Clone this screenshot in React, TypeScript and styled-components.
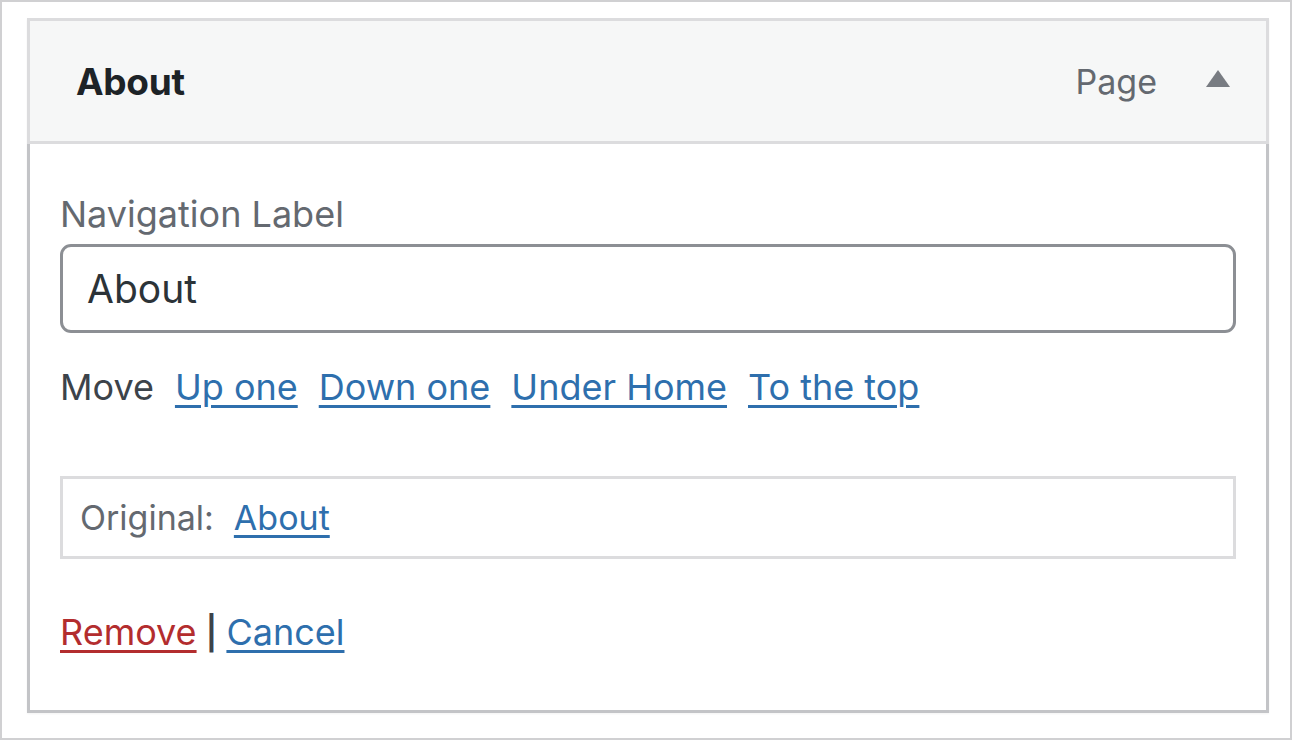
import React from "react";
import styled, { createGlobalStyle } from "styled-components";

const GlobalStyle = createGlobalStyle`
  html, body {
    margin: 0;
    padding: 0;
    background: #ffffff;
  }
  body {
    font-family: Inter, "Noto Sans", "Liberation Sans", sans-serif;
  }
`;

const Frame = styled.div`
  box-sizing: border-box;
  width: 1292px;
  height: 740px;
  border: 2px solid #d0d0d2;
  padding: 16px 0 0 25px;
  background: #ffffff;
`;

const Card = styled.div`
  width: 1242px;
  box-shadow: 0 1px 2px rgba(0, 0, 0, 0.05);
`;

const Header = styled.div`
  box-sizing: border-box;
  height: 126px;
  display: flex;
  align-items: center;
  padding: 0 36px 0 46px;
  background: #f6f7f7;
  border: 3px solid #dcdcde;
`;

const Title = styled.div`
  flex: 1;
  font-size: 37px;
  font-weight: 700;
  color: #1d2327;
  letter-spacing: -0.3px;
`;

const ItemType = styled.span`
  font-size: 34px;
  color: #646970;
  margin-right: 49px;
`;

const Toggle = styled.svg`
  width: 24px;
  height: 17px;
  margin-top: -6px;
  fill: #787c82;
`;

const Body = styled.div`
  box-sizing: border-box;
  height: 569px;
  padding: 45px 30px 0 30px;
  border: 3px solid #c3c4c7;
  border-top: none;
`;

const Label = styled.label`
  display: block;
  font-size: 36px;
  line-height: 50px;
  color: #646970;
`;

const TextInput = styled.input`
  box-sizing: border-box;
  display: block;
  width: 100%;
  height: 89px;
  margin-top: 5px;
  padding: 0 24px;
  font-family: inherit;
  font-size: 39px;
  color: #2c3338;
  border: 3px solid #8c8f94;
  border-radius: 11px;
  background: #ffffff;
  outline: none;
`;

const MoveRow = styled.div`
  display: flex;
  gap: 21px;
  margin-top: 29px;
  font-size: 36px;
  line-height: 50px;
  color: #3c434a;
`;

const Link = styled.a<{ $danger?: boolean }>`
  color: ${(p) => (p.$danger ? "#b32d2e" : "#2e6fad")};
  text-decoration: underline;
  text-decoration-thickness: 3px;
  text-underline-offset: 5px;
  cursor: pointer;
`;

const Original = styled.div`
  box-sizing: border-box;
  height: 83px;
  margin-top: 64px;
  padding: 0 17px;
  display: flex;
  align-items: center;
  gap: 20px;
  border: 3px solid #dcdcde;
  font-size: 34px;
  line-height: 50px;
  color: #646970;
`;

const Actions = styled.div`
  margin-top: 48px;
  font-size: 36px;
  line-height: 50px;
  color: #3c434a;
`;

const Sep = styled.span`
  margin: 0 9px;
  font-size: 33px;
  font-weight: 600;
`;

export default function App() {
  return (
    <>
      <GlobalStyle />
      <Frame>
        <Card>
          <Header>
            <Title>About</Title>
            <ItemType>Page</ItemType>
            <Toggle viewBox="0 0 24 17">
              <polygon points="12,0 24,17 0,17" />
            </Toggle>
          </Header>
          <Body>
            <Label htmlFor="nav-label">Navigation Label</Label>
            <TextInput id="nav-label" defaultValue="About" />
            <MoveRow>
              <span>Move</span>
              <Link>Up one</Link>
              <Link>Down one</Link>
              <Link>Under Home</Link>
              <Link>To the top</Link>
            </MoveRow>
            <Original>
              <span>Original:</span>
              <Link>About</Link>
            </Original>
            <Actions>
              <Link $danger>Remove</Link>
              <Sep>|</Sep>
              <Link>Cancel</Link>
            </Actions>
          </Body>
        </Card>
      </Frame>
    </>
  );
}
